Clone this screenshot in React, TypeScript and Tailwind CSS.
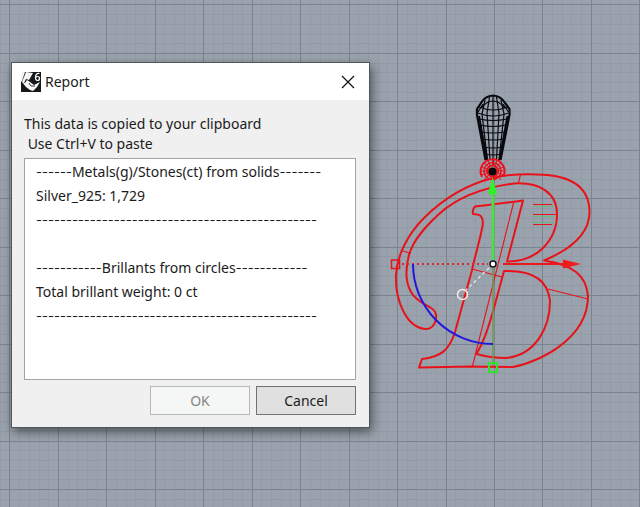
import { Fragment } from "react";

const GRID_STEP = 48.45;

type ReportLine = {
  id: string;
  before?: number;
  text?: string;
  after?: number;
};

const reportLines: ReportLine[] = [
  { id: "metals", before: 6, text: "Metals(g)/Stones(ct) from solids", after: 7 },
  { id: "silver", text: "Silver_925: 1,729" },
  { id: "metals-end", before: 47 },
  { id: "gap" },
  { id: "brillants", before: 11, text: "Brillants from circles", after: 12 },
  { id: "weight", text: "Total brillant weight: 0 ct" },
  { id: "brillants-end", before: 47 },
];

const gridLines = (start: number, count: number) =>
  Array.from({ length: count * 5 }, (_, i) => ({
    pos: Math.round(start + (i * GRID_STEP) / 5) + 0.5,
    major: i % 5 === 0,
  }));

const Grid = () => (
  <g strokeWidth="1">
    {[false, true].map((major) => (
      <Fragment key={String(major)}>
        {gridLines(-39, 60)
          .filter((line) => line.major === major)
          .map(({ pos }) => (
            <path
              key={`v${pos}`}
              d={`M${pos} 0V2000`}
              stroke={major ? "#7a848f" : "#929ba6"}
            />
          ))}
        {gridLines(-44, 42)
          .filter((line) => line.major === major)
          .map(({ pos }) => (
            <path
              key={`h${pos}`}
              d={`M0 ${pos}H2900`}
              stroke={major ? "#7a848f" : "#929ba6"}
            />
          ))}
      </Fragment>
    ))}
  </g>
);

const Bail = () => (
  <g fill="none" stroke="#07090e">
    <path
      d="M485.5 160L477 115V109L481 103Q485 96 493 95.500Q501 96 505 103L509.500 109V115L500.500 160"
      strokeWidth="2.200"
    />
    <path
      d="M478 113Q493 119 508.500 113M479 107Q493 113 507.500 107M481 108Q493 94 505 108M479 119Q493 122 507 119M480 125Q493 128 506 125M481 132Q493 134 505 132M482 139Q493 141 504 139M484 147Q493 149 503 147M485 154Q493 156 501 154"
      strokeWidth="1.200"
    />
    <path
      d="M493 96V165M489.500 97L487 113L490 160M496.500 97L499 113L496.500 160M485 100L482 114L487.500 160M501 100L504 114L499 160M478 112L483 104M508.500 112L503 104"
      strokeWidth="1.200"
    />
    <path d="M479 116L487 160M507.500 116L499.500 160" strokeWidth="2" />
  </g>
);

const Ring = () => (
  <g fill="none" stroke="#ee0f1a">
    <path d="M482 177A12 12 0 1 1 504 175" strokeWidth="2" />
    <circle cx="492.500" cy="171" r="8.500" strokeWidth="1.500" />
    <circle cx="492.500" cy="171" r="5.500" strokeWidth="2" />
    <path
      d="M480 171H505M492.500 159V166M484 162L501 180M501 162L484 180M488 160L490 167M497 160L495 167M481 167L504 175M504 167L481 175"
      strokeWidth="1"
    />
    <circle cx="492.500" cy="171.500" r="4" fill="#0b0506" stroke="none" />
  </g>
);

const Monogram = () => (
  <g fill="none" stroke="#e8121a" strokeLinejoin="round">
    <g strokeWidth="2">
      <path d="M544 260.500C562 253 589.500 238 589.500 212C589.500 186 569 175 537 174.500C522 174 508 174 493 178C469 184 444 198 424 218C408 234 397 255 396 275C395 299 406 329 427 329C436 328 440 313 431 308C424 303 417 302 411 292C405 281 406 266 409 255C413 240 425 227 439 214C458 197 486 187 514 183.500C540 182 557 193 557 214C557 240 537 262 507 261.500L523 200.500C507 203 494 204 475 206.500Q472 209 473 214C480 214 484 216 482.500 226C480 240 476 252 472 270L455 332C449 351 440 357 422 359L419 367.500L471 366.500L513 367C535 363 588 341 588 296C586 275 573 265 544 260.500Z" />
      <path d="M504 271L494 308C489 325 485 340 476.500 354C487 357 496 358 506 358C536 355 550 327 550 301C548 280 532 270 504 271Z" />
    </g>
    <path
      d="M513.500 203L472.500 366M472 269L502 277M548 289L588 299M520.500 174.500L518.500 183M401.500 250.500L411 253.500"
      strokeWidth="1.100"
    />
    <path
      d="M533 204.500H552M533 214.500H556M533 224.500H552"
      strokeWidth="1.200"
    />
    <path
      d="M535 206.500H554M532 216.500H554M532 222.500H556"
      stroke="#66b97c"
      strokeWidth="1"
    />
  </g>
);

const Gumball = () => (
  <g fill="none">
    <path
      d="M402 264H488"
      stroke="#d5292f"
      strokeWidth="2"
      strokeDasharray="2 3"
    />
    <rect x="391.500" y="260" width="8" height="8.500" stroke="#e8121a" strokeWidth="1.500" />
    <path d="M503 264H566" stroke="#e8181c" strokeWidth="2" />
    <path d="M563 259.500L581 264L563 268.500Z" fill="#f01c1c" />
    <path d="M493 268V365" stroke="#6f9a4d" strokeWidth="1.500" />
    <path d="M493 192V260" stroke="#4fdc4a" strokeWidth="3" />
    <path d="M492.500 177L497 194H488Z" fill="#2df226" />
    <rect x="489" y="363" width="8" height="9" stroke="#2ee52b" strokeWidth="2" />
    <path d="M413 264A80 80 0 0 0 493 344" stroke="#2418dc" strokeWidth="2" />
    <path
      d="M489 268L466 290"
      stroke="#eef0f2"
      strokeWidth="1.200"
      strokeDasharray="3 3"
    />
    <circle cx="462.500" cy="294.500" r="5" stroke="#f8e9ea" strokeWidth="1.500" />
    <circle cx="493" cy="264" r="3" fill="#fff" stroke="#161616" strokeWidth="1.500" />
  </g>
);

const Viewport = () => (
  <svg
    className="absolute inset-0 h-full w-full"
    role="img"
    aria-label="Top viewport"
  >
    <Grid />
    <Bail />
    <Monogram />
    <Ring />
    <Gumball />
  </svg>
);

const AppIcon = () => (
  <svg width="20" height="20" viewBox="0 0 20 20" aria-hidden="true">
    <path d="M0 0H20V20H0Z" fill="#17181a" />
    <path d="M0 0H4L1 9L0 10ZM5 0L12 1L8 8L5 7L3 11L1 10Z" fill="#f5f5f5" />
    <path
      d="M1 10L4 11L6 8L9 10L13 13L19 10L16 15L12 19L9 18L5 15Z"
      fill="#fafafa"
    />
    <path d="M8 11L10 14L14 14" fill="none" stroke="#3b3b3b" />
    <path
      d="M18.500 1.500Q14.500 1 14.500 5.500Q14.500 8.500 16.500 8.500Q18.500 8.500 18.500 6.500Q18.500 4.500 16.500 4.500Q15 4.500 14.500 6"
      fill="none"
      stroke="#fff"
      strokeWidth="1.200"
    />
  </svg>
);

const Dashes = ({ count }: { count: number }) => (
  <span className="font-['Inter',sans-serif] text-[13px]">
    {"-".repeat(count)}
  </span>
);

const ReportDialog = () => (
  <section
    role="dialog"
    aria-labelledby="report-title"
    className="absolute top-[62px] left-[11px] w-[359px] border border-[#50565c] bg-[#f0f0f0] shadow-[2px_4px_10px_rgba(0,0,0,0.5)]"
  >
    <header className="flex h-[37px] items-center gap-1 bg-white pr-2 pl-[9px]">
      <AppIcon />
      <h1 id="report-title" className="flex-1 text-sm">
        Report
      </h1>
      <button type="button" aria-label="Close" className="p-1.5">
        <svg width="14" height="14" viewBox="0 0 14 14" aria-hidden="true">
          <path d="M1 1L13 13M13 1L1 13" stroke="#111" strokeWidth="1.200" />
        </svg>
      </button>
    </header>

    <div className="pt-3.5 pr-[13px] pb-3 pl-3">
      <p className="text-sm leading-5">
        This data is copied to your clipboard
        <br />
        &nbsp;Use Ctrl+V to paste
      </p>

      <ul className="mt-1 h-[222px] border border-[#a2a5a8] bg-white px-[11px] py-px text-sm leading-6">
        {reportLines.map((line) => (
          <li key={line.id} className="flex h-6 items-center whitespace-pre">
            {line.before && <Dashes count={line.before} />}
            {line.text}
            {line.after && <Dashes count={line.after} />}
          </li>
        ))}
      </ul>

      <div className="mt-1.5 flex justify-end gap-1.5">
        <button
          type="button"
          disabled
          className="h-[29px] w-[100px] border border-[#b4b6b8] bg-[#f5f6f6] text-sm text-[#858585]"
        >
          OK
        </button>
        <button
          type="button"
          className="h-[29px] w-[100px] border border-[#707274] bg-[#e0e0e0] text-sm"
        >
          Cancel
        </button>
      </div>
    </div>
  </section>
);

const App = () => {
  return (
    <main className="relative min-h-screen overflow-hidden bg-[#9aa3ad] font-['Noto_Sans',sans-serif] text-[#1b1b1b]">
      <Viewport />
      <ReportDialog />
    </main>
  );
};

export default App;
